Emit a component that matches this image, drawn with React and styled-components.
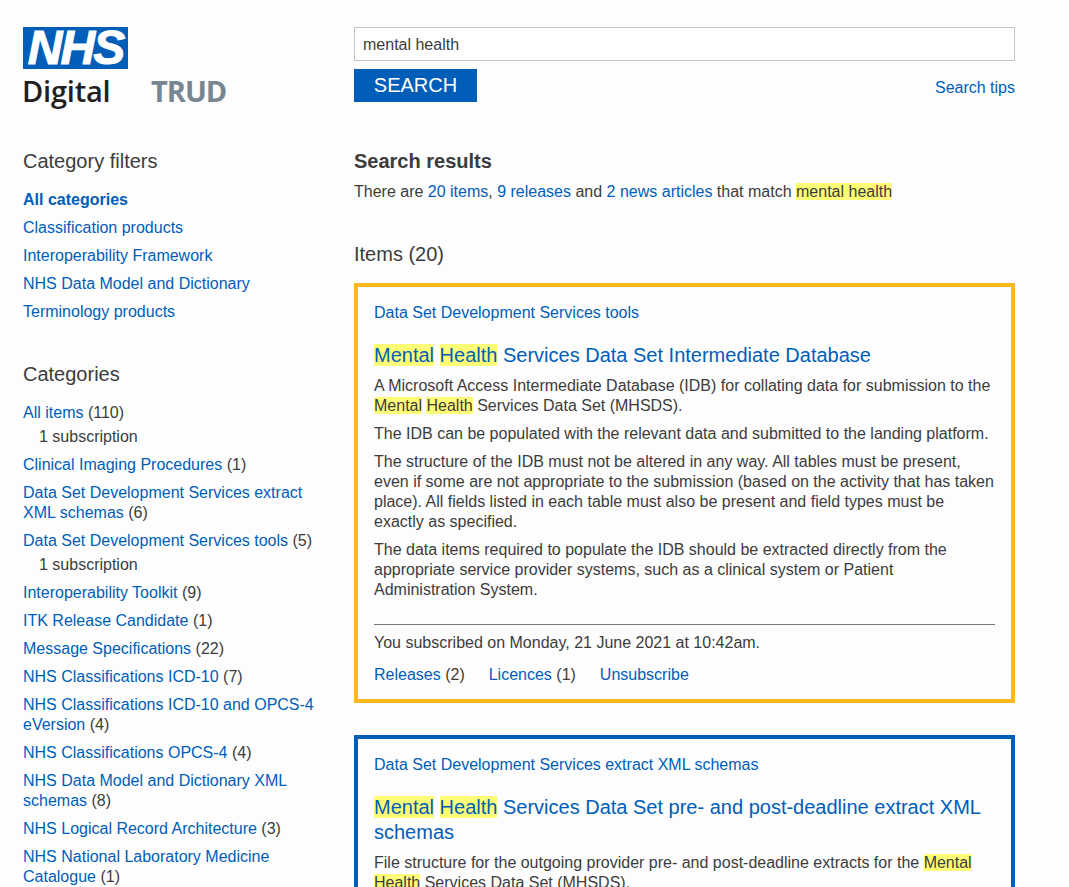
import React from "react";
import styled, { createGlobalStyle } from "styled-components";

const Global = createGlobalStyle`
  html, body { margin: 0; padding: 0; background: #fdfdfd; overflow: hidden; }
  body { font-family: "Liberation Sans", Arial, sans-serif; font-size: 16px; line-height: 20px; color: #3c3c3c; }
  #root { height: 887px; overflow: hidden; }
  a { color: #005eb8; text-decoration: none; }
  mark { background: #ffff77; color: inherit; }
`;

const Page = styled.div`
  display: grid;
  grid-template-columns: 331px 661px;
  padding: 27px 0 0 23px;
  width: 1069px;
  box-sizing: border-box;
`;
const Side = styled.aside`display: flex; flex-direction: column; padding-right: 16px;`;
const Main = styled.main`display: flex; flex-direction: column;`;

const LogoRow = styled.div`display: flex; align-items: flex-end; height: 83px;`;
const LogoStack = styled.div`display: flex; flex-direction: column; width: 128px;`;
const NhsMark = styled.div`
  width: 105px; height: 42px; background: #005eb8; color: #fff;
  font: italic 700 48px/42px "Liberation Sans", sans-serif; letter-spacing: -2px;
  -webkit-text-stroke: 1px #fff;
  text-align: center; white-space: nowrap;
`;
const Digital = styled.div`
  font: 600 29px/38px "Open Sans", sans-serif; color: #231f20; letter-spacing: -.2px; margin: 3px 0 0 -1px; height: 38px;
`;
const Trud = styled.div`
  font: 700 29px/38px "Open Sans", sans-serif; color: #768692; letter-spacing: -1px; height: 38px;
`;

const SideHeading = styled.h2`
  font-size: 20px; line-height: 24px; font-weight: 400; margin: ${p => p.$top}px 0 17px;
`;
const FilterList = styled.ul`list-style: none; margin: 0; padding: 0; display: flex; flex-direction: column; gap: 8px;`;
const FilterItem = styled.li`font-weight: ${p => (p.$active ? 700 : 400)};`;
const Sub = styled.div`padding-left: 16px; margin-top: 4px;`;

const SearchInput = styled.div`
  height: 34px; box-sizing: border-box; border: 1px solid #c4c4c4; background: #fff;
  padding: 1px 8px 0; line-height: 32px;
`;
const SearchRow = styled.div`display: flex; justify-content: space-between; align-items: center; margin-top: 8px;`;
const TipsLink = styled.a`position: relative; top: 2px;`;
const SearchButton = styled.button`
  width: 123px; height: 33px; border: 0; padding: 0; background: #005eb8; color: #fff;
  font: 20px/33px "Liberation Sans", sans-serif;
`;
const ResultsTitle = styled.h1`font-size: 20px; line-height: 24px; font-weight: 700; margin: 47px 0 9px;`;
const Summary = styled.p`margin: 0;`;
const ItemsTitle = styled.h2`font-size: 20px; line-height: 24px; font-weight: 400; margin: 40px 0 17px;`;

const Card = styled.article`
  border: 4px solid ${p => p.$color};
  padding: 16px 16px 14px;
  margin-bottom: 32px;
  background: #fdfdfd;
`;
const CardCategory = styled.a`display: block;`;
const CardTitle = styled.h3`font-size: 20px; line-height: 25px; font-weight: 400; margin: 20px 0 8px;`;
const CardText = styled.p`margin: 0 0 8px;`;
const Rule = styled.hr`border: 0; border-top: 1px solid #777; margin: 24px 0 8px;`;
const CardFoot = styled.p`margin: 0 0 12px;`;
const Actions = styled.div`display: flex; gap: 24px;`;

const filters = ["Classification products", "Interoperability Framework", "NHS Data Model and Dictionary", "Terminology products"];
const cats = [
  ["All items", 110, "1 subscription"],
  ["Clinical Imaging Procedures", 1],
  ["Data Set Development Services extract XML schemas", 6],
  ["Data Set Development Services tools", 5, "1 subscription"],
  ["Interoperability Toolkit", 9],
  ["ITK Release Candidate", 1],
  ["Message Specifications", 22],
  ["NHS Classifications ICD-10", 7],
  ["NHS Classifications ICD-10 and OPCS-4 eVersion", 4],
  ["NHS Classifications OPCS-4", 4],
  ["NHS Data Model and Dictionary XML schemas", 8],
  ["NHS Logical Record Architecture", 3],
  ["NHS National Laboratory Medicine Catalogue", 1],
];

export default function App() {
  return (
    <>
      <Global />
      <Page>
        <Side>
          <LogoRow>
            <LogoStack>
              <NhsMark>NHS</NhsMark>
              <Digital>Digital</Digital>
            </LogoStack>
            <Trud>TRUD</Trud>
          </LogoRow>
          <SideHeading $top={39}>Category filters</SideHeading>
          <FilterList>
            <FilterItem $active><a href="#">All categories</a></FilterItem>
            {filters.map(f => <FilterItem key={f}><a href="#">{f}</a></FilterItem>)}
          </FilterList>
          <SideHeading $top={40}>Categories</SideHeading>
          <FilterList>
            {cats.map(([n, c, s]) => (
              <FilterItem key={n}>
                <a href="#">{n}</a> ({c})
                {s && <Sub>{s}</Sub>}
              </FilterItem>
            ))}
          </FilterList>
        </Side>
        <Main>
          <SearchInput>mental health</SearchInput>
          <SearchRow>
            <SearchButton>SEARCH</SearchButton>
            <TipsLink href="#">Search tips</TipsLink>
          </SearchRow>
          <ResultsTitle>Search results</ResultsTitle>
          <Summary>
            There are <a href="#">20 items</a>, <a href="#">9 releases</a> and <a href="#">2 news articles</a> that match <mark>mental health</mark>
          </Summary>
          <ItemsTitle>Items (20)</ItemsTitle>
          <Card $color="#ffb81c">
            <CardCategory href="#">Data Set Development Services tools</CardCategory>
            <CardTitle><a href="#"><mark>Mental</mark> <mark>Health</mark> Services Data Set Intermediate Database</a></CardTitle>
            <CardText>A Microsoft Access Intermediate Database (IDB) for collating data for submission to the <mark>Mental</mark> <mark>Health</mark> Services Data Set (MHSDS).</CardText>
            <CardText>The IDB can be populated with the relevant data and submitted to the landing platform.</CardText>
            <CardText>The structure of the IDB must not be altered in any way. All tables must be present, even if some are not appropriate to the submission (based on the activity that has taken place). All fields listed in each table must also be present and field types must be exactly as specified.</CardText>
            <CardText>The data items required to populate the IDB should be extracted directly from the appropriate service provider systems, such as a clinical system or Patient Administration System.</CardText>
            <Rule />
            <CardFoot>You subscribed on Monday, 21 June 2021 at 10:42am.</CardFoot>
            <Actions>
              <span><a href="#">Releases</a> (2)</span>
              <span><a href="#">Licences</a> (1)</span>
              <a href="#">Unsubscribe</a>
            </Actions>
          </Card>
          <Card $color="#005eb8">
            <CardCategory href="#">Data Set Development Services extract XML schemas</CardCategory>
            <CardTitle><a href="#"><mark>Mental</mark> <mark>Health</mark> Services Data Set pre- and post-deadline extract XML schemas</a></CardTitle>
            <CardText>File structure for the outgoing provider pre- and post-deadline extracts for the <mark>Mental</mark> <mark>Health</mark> Services Data Set (MHSDS).</CardText>
          </Card>
        </Main>
      </Page>
    </>
  );
}
